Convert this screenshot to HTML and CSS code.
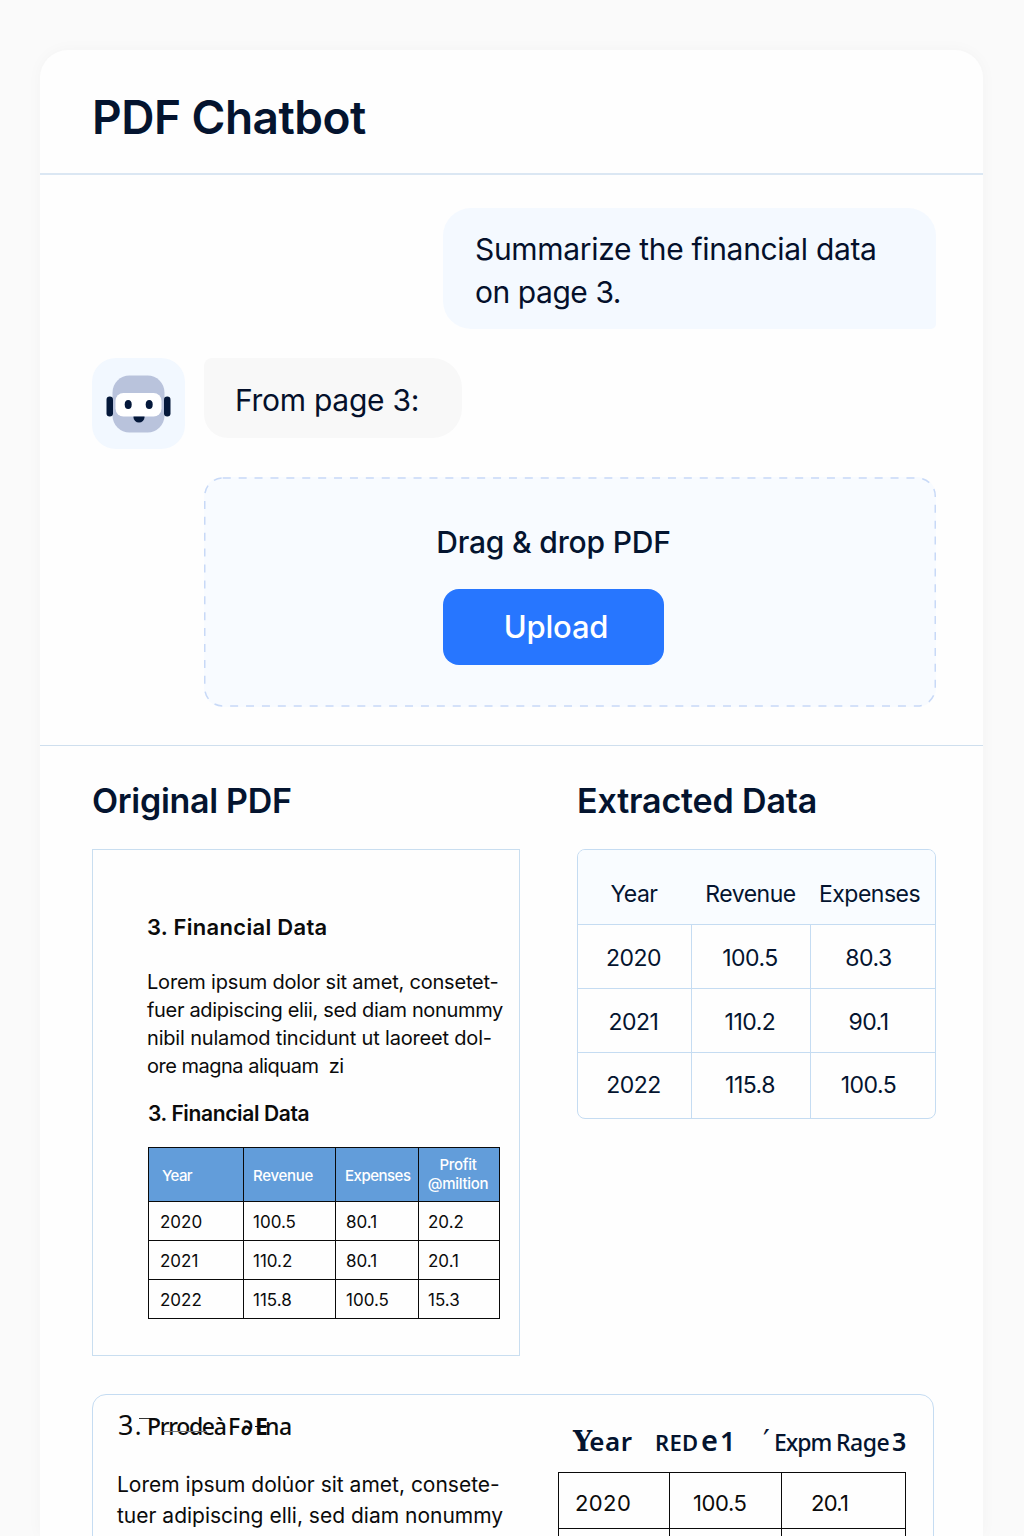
FILE: index.html
```html
<!DOCTYPE html>
<html lang="en">
<head>
<meta charset="utf-8">
<title>PDF Chatbot</title>
<link rel="stylesheet" href="styles.css">
</head>
<body>
<main class="card">
  <header class="card-header"><h1>PDF Chatbot</h1></header>

  <section class="chat">
    <div class="bubble bubble-user"><span class="u1">Summarize the financial data</span><br><span class="u2">on page 3.</span></div>
    <div class="bot-row">
      <div class="avatar">
        <svg width="66" height="60" viewBox="0 0 66 60">
          <rect x="6.500" y="0.500" width="52" height="57" rx="17" fill="#b9c3dc"/>
          <rect x="9.500" y="18" width="46" height="23.500" rx="8" fill="#fff"/>
          <rect x="0.500" y="21.500" width="6.500" height="20" rx="3.200" fill="#04183a"/>
          <rect x="58" y="21.500" width="6.500" height="20" rx="3.200" fill="#04183a"/>
          <ellipse cx="22.200" cy="29.500" rx="3.500" ry="4.500" fill="#04183a"/>
          <ellipse cx="43.200" cy="29.500" rx="3.500" ry="4.500" fill="#04183a"/>
          <path d="M27.500 41.500h11v.8a5.500 5.200 0 0 1-11 0z" fill="#04183a"/>
        </svg>
      </div>
      <div class="bubble bubble-bot"><span class="b1">From page 3:</span></div>
    </div>
    <div class="dropzone">
      <svg class="dashes" width="732" height="230"><rect x="0.750" y="1" width="730.500" height="228" rx="18"/></svg>
      <p class="drop-label">Drag &amp; drop PDF</p>
      <button class="upload">Upload</button>
    </div>
  </section>

  <section class="results">
    <div class="original">
      <h2 class="h2a">Original PDF</h2>
      <article class="page">
        <h3 class="first">3. Financial Data</h3>
        <p class="lorem">
          <span class="l1">Lorem ipsum dolor sit amet, consetet-</span><br>
          <span class="l2">fuer adipiscing elii, sed diam nonummy</span><br>
          <span class="l3">nibil nulamod tincidunt ut laoreet dol-</span><br>
          <span class="l4">ore magna aliquam&nbsp; zi</span>
        </p>
        <h3 class="second">3. Financial Data</h3>
        <table class="pdf-table">
          <colgroup><col class="p1"><col class="p2"><col class="p3"><col class="p4"></colgroup>
          <tr><th class="wide-pad">Year</th><th>Revenue</th><th class="tight">Expenses</th><th class="profit">Profit<br>@miltion</th></tr>
          <tr><td class="year">2020</td><td>100.5</td><td class="exp">80.1</td><td>20.2</td></tr>
          <tr><td class="year">2021</td><td>110.2</td><td class="exp">80.1</td><td>20.1</td></tr>
          <tr><td class="year">2022</td><td>115.8</td><td class="exp">100.5</td><td>15.3</td></tr>
        </table>
      </article>
    </div>
    <div class="extracted">
      <h2 class="h2b">Extracted Data</h2>
      <div class="data-grid">
        <div class="row head"><span>Year</span><span>Revenue</span><span>Expenses</span></div>
        <div class="row"><b>2020</b><b>100.5</b><b>80.3</b></div>
        <div class="row"><b>2021</b><b>110.2</b><b>90.1</b></div>
        <div class="row last"><b>2022</b><b>115.8</b><b>100.5</b></div>
      </div>
    </div>
  </section>

  <section class="preview">
    <div class="preview-text">
      <h3 class="garbled"><span class="num">3</span><span class="dot">.</span><span class="g1">Prrodeà</span><span class="g2">F</span><span class="g3">∂</span><span class="g4">E</span><span class="g5">na</span></h3>
      <p class="lorem2">
        <span class="m1">Lorem ipsum dolu̇or sit amet, consete-</span><br>
        <span class="m2">tuer adipiscing elli, sed diam nonummy</span>
      </p>
    </div>
    <div class="preview-data">
      <div class="sketch-head"><span class="s-year"><span class="s-y">Y</span>ear</span><span class="s-red">RED</span><span class="s-e">e</span><span class="s-l">1</span><span class="s-tick">′</span><span class="s-exp">Expm</span><span class="s-rage">Rage</span><span class="s-3">3</span></div>
      <table class="sketch-table">
        <colgroup><col class="q1"><col class="q2"><col class="q3"></colgroup>
        <tr><td class="c1">2020</td><td class="c2">100.5</td><td class="c3">20.1</td></tr>
        <tr><td></td><td></td><td></td></tr>
      </table>
    </div>
  </section>
</main>
</body>
</html>
```
FILE: styles.css
```css
* { box-sizing: border-box; }
html, body { margin: 0; height: 1536px; overflow: hidden; }
body {
  background: #fafafa;
  color: #04142f;
  font-family: Inter, "Liberation Sans", sans-serif;
  padding: 50px 41px 0 40px;
}
h1, h2, h3, p { margin: 0; }
.card {
  height: 1486px;
  overflow: hidden;
  background: #fefefe;
  border-radius: 28px 28px 0 0;
  box-shadow: 0 0 16px rgba(0, 0, 0, .03);
}
.card-header { height: 125px; padding: 38px 52px 0; border-bottom: 2px solid #dbe7f3; }
h1 { font-size: 46px; line-height: 58px; font-weight: 560; letter-spacing: -.5px; white-space: nowrap; }

/* Conversation */
.chat { height: 571px; padding: 33px 47px 0 52px; border-bottom: 1px solid #cfdfee; }
.bubble { font-size: 30px; line-height: 43px; white-space: nowrap; color: #04102b; }
.u1 { letter-spacing: -.32px; }
.u2 { letter-spacing: -.45px; }
.b1 { letter-spacing: -.27px; }
.bubble-user {
  width: 493px; height: 121px; margin-left: auto; padding: 20px 32px 0;
  background: #f4f9ff; border-radius: 28px 28px 5px 28px;
}
.bot-row { display: flex; gap: 19px; margin-top: 29px; }
.avatar { width: 93px; height: 91px; border-radius: 24px; background: #f2f8ff; padding: 17px 0 0 14px; }
.avatar svg { display: block; }
.bubble-bot { width: 258px; height: 80px; padding: 21px 31px 0; background: #f8f8f8; border-radius: 8px 30px 30px 24px; }
.dropzone {
  position: relative; width: 732px; height: 230px; margin: 28px 0 0 112px; padding-top: 44px;
  background: #f8fbff; border-radius: 19px; display: flex; flex-direction: column; align-items: center;
}
.dashes { position: absolute; inset: 0; }
.dashes rect { fill: none; stroke: #c8d9f7; stroke-width: 1.500px; stroke-dasharray: 8 7.900; }
.drop-label { font-size: 30px; line-height: 42px; font-weight: 500; letter-spacing: -.17px; margin: 0 33px 0 0; white-space: nowrap; }
.upload {
  width: 221px; height: 76px; margin: 26px 33px 0 0; border: 0; border-radius: 16px; padding: 0 0 0 5px;
  background: #2776ff; color: #fff; font: 540 31px/76px Inter, sans-serif; letter-spacing: -.2px;
}

/* Results */
.results { display: flex; gap: 57px; padding: 34px 47px 0 52px; height: 648px; }
h2 { font-size: 34px; line-height: 42px; font-weight: 560; white-space: nowrap; margin-bottom: 27px; }
.h2a { letter-spacing: -.3px; }
.h2b { letter-spacing: -.15px; }
.page { width: 428px; height: 507px; border: 1px solid #c9def0; padding: 64px 0 0 54px; color: #0b0b0b; white-space: nowrap; }
h3 { font-size: 22px; line-height: 28px; font-weight: 600; }
h3.first { letter-spacing: .3px; margin-top: -1px; }
.lorem { font-size: 20px; line-height: 28px; margin-top: 27px; }
.l1 { letter-spacing: -.2px; }
.l2 { letter-spacing: -.33px; }
.l3 { letter-spacing: -.18px; }
.l4 { letter-spacing: -.5px; }
h3.second { font-size: 21px; margin-top: 20px; letter-spacing: -.36px; padding-left: 1px; }
table { border-collapse: collapse; table-layout: fixed; }
.pdf-table { width: 351px; margin: 19px 0 0 1px; font-size: 17px; }
.pdf-table th, .pdf-table td { border: 1px solid #0a0a0a; text-align: left; padding: 1px 0 0 9px; height: 39px; font-weight: 400; }
.pdf-table .year { padding-left: 11px; }
.pdf-table .exp { padding-left: 10px; }
.pdf-table th { height: 54px; background: #629dda; color: #fff; font-size: 15px; line-height: 19px; font-weight: 500; letter-spacing: -.3px; }
.pdf-table th.wide-pad { padding-left: 13px; letter-spacing: -.6px; }
.pdf-table th.tight { letter-spacing: -.5px; }
.p1 { width: 95px; } .p2 { width: 92px; } .p3 { width: 83px; } .p4 { width: 81px; }
.pdf-table .profit { text-align: center; padding: 0 2px 1px 0; }
.data-grid { width: 359px; height: 270px; border: 1px solid #c5dcf2; border-radius: 8px; overflow: hidden; font-size: 23px; letter-spacing: -.5px; }
.row { display: grid; grid-template-columns: 114px 119px 1fr; height: 64px; border-top: 1px solid #c5dcf2; text-align: center; line-height: 67px; white-space: nowrap; }
.row.last { height: 67px; line-height: 64px; }
.row b { font-weight: 400; border-right: 1px solid #c5dcf2; padding-right: 2px; }
.row b:last-child { border-right: 0; padding-right: 9px; }
.row.head { height: 74px; border-top: 0; line-height: 88px; background: #f9fcff; }
.row.head span { padding-right: 2px; }
.row.head span:last-child { padding-right: 7px; }

/* Page preview, continues past the fold */
.preview { margin: 0 49px 0 52px; height: 300px; border: 1px solid #c5dcf2; border-radius: 14px; display: flex; color: #0b0b0b; padding-left: 25px; white-space: nowrap; }
.preview-text { width: 440px; }
.garbled { display: flex; align-items: baseline; font: 500 23px/32px "Noto Sans", sans-serif; margin-top: 14px; height: 32px; }
.num { font: 27px/32px "Noto Sans", sans-serif; width: 17px; }
.dot { width: 12px; position: relative; }
.dot::after { content: ""; position: absolute; left: 4px; top: 8px; width: 14px; height: 1px; background: #333; }
.g1 { width: 81px; letter-spacing: -1.300px; position: relative; }
.g1::after { content: ""; position: absolute; left: 16px; bottom: 10px; width: 44px; height: 1px; background: #777; }
.g2 { width: 13px; }
.g3 { width: 14px; font: bold 22px/32px "DejaVu Sans", sans-serif; }
.g4 { width: 10px; font-weight: 700; text-decoration: line-through 1px; }
.g5 { letter-spacing: -.3px; }
.lorem2 { font-size: 21px; line-height: 31px; margin-top: 28px; }
.m1, .m2 { margin-left: -1px; }
.sketch-head { display: flex; align-items: baseline; height: 77px; padding: 25px 0 0 15px; font: 500 22px/40px "DejaVu Sans", sans-serif; color: #04142f; }
.s-year { font: 600 26px/40px "Noto Sans", sans-serif; width: 82px; letter-spacing: .5px; }
.s-y { font: bold 27px/40px "DejaVu Serif", serif; letter-spacing: -3px; }
.s-red { font: 600 22px/40px "Noto Sans", sans-serif; width: 46px; letter-spacing: .3px; }
.s-e { font: 600 29px/40px "Noto Sans", sans-serif; width: 19px; }
.s-l { font: 600 27px/40px "Noto Sans", sans-serif; width: 43px; }
.s-tick { width: 11px; font-size: 30px; }
.s-exp { font: 500 23px/40px "Noto Sans", sans-serif; width: 62px; letter-spacing: -1px; }
.s-rage { font: 500 23px/40px "Noto Sans", sans-serif; width: 56px; letter-spacing: -.5px; }
.s-3 { font: 600 25px/40px "Noto Sans", sans-serif; }
.sketch-table { width: 347px; font-size: 22px; }
.sketch-table td { border: 1px solid #0a0a0a; height: 56px; padding: 4px 0 0; }
.sketch-table .c1 { padding-left: 16px; letter-spacing: .4px; }
.sketch-table .c2 { padding-left: 23px; letter-spacing: -.4px; }
.sketch-table .c3 { padding-left: 29px; letter-spacing: -.7px; }
.q1 { width: 111px; } .q2 { width: 112px; } .q3 { width: 124px; }
```
